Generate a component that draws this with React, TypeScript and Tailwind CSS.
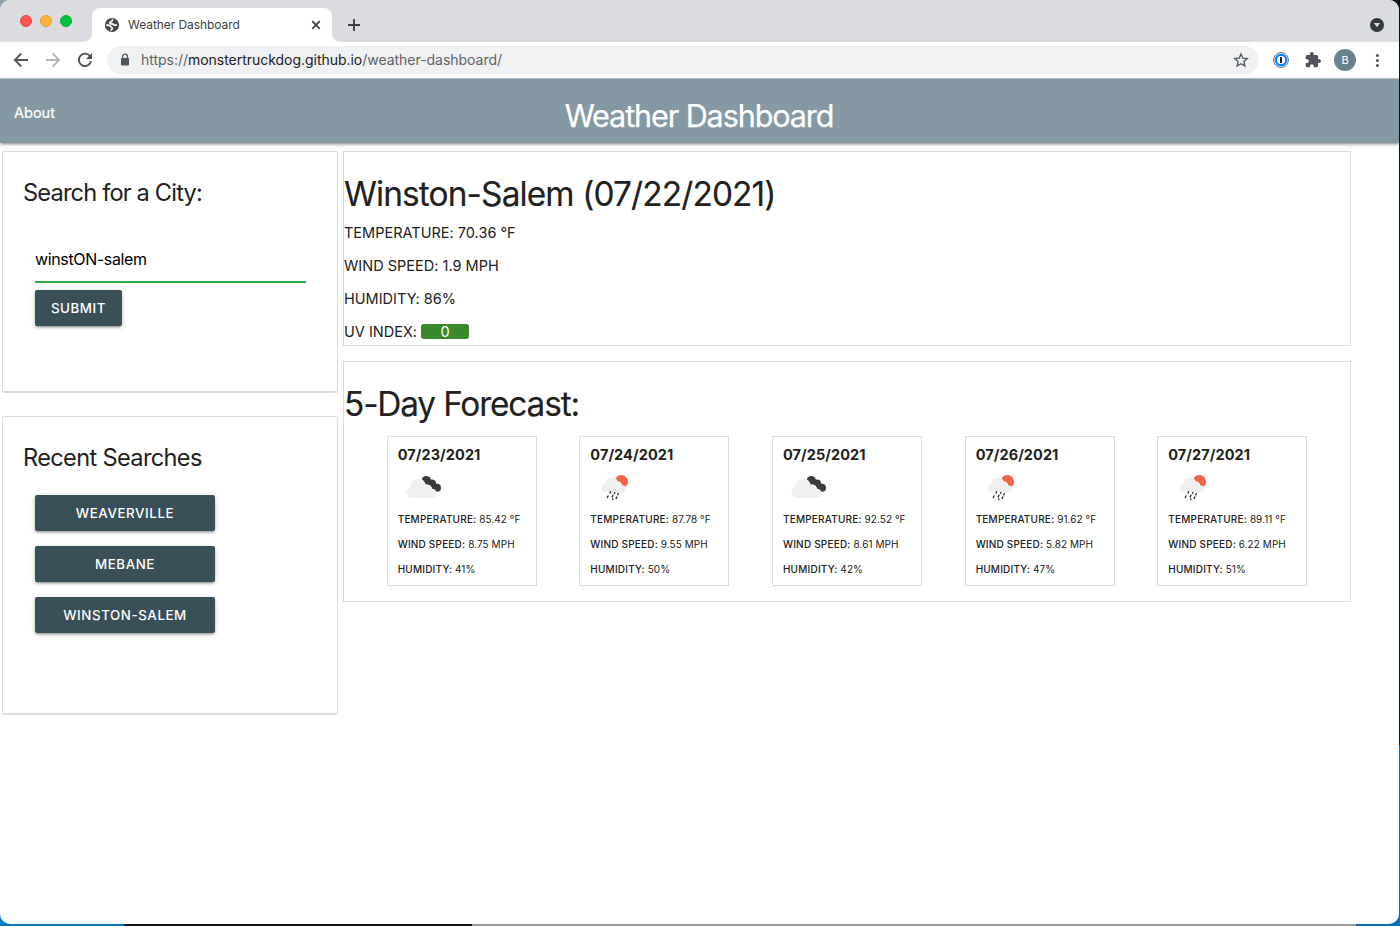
import React from "react";

const FORECAST = [
  { date: "07/23/2021", icon: "clouds", temp: "85.42", wind: "8.75", humidity: 41 },
  { date: "07/24/2021", icon: "rain", temp: "87.78", wind: "9.55", humidity: 50 },
  { date: "07/25/2021", icon: "clouds", temp: "92.52", wind: "8.61", humidity: 42 },
  { date: "07/26/2021", icon: "rain", temp: "91.62", wind: "5.82", humidity: 47 },
  { date: "07/27/2021", icon: "rain", temp: "89.11", wind: "6.22", humidity: 51 },
];

const RECENT = ["Weaverville", "Mebane", "Winston-Salem"];

const BUTTON =
  "h-9 rounded-[2px] bg-[#3a5058] text-[13.3px] font-medium leading-9 tracking-[0.6px] text-white uppercase text-center shadow-[0_2px_2px_0_rgba(0,0,0,0.14),0_3px_1px_-2px_rgba(0,0,0,0.12),0_1px_5px_0_rgba(0,0,0,0.2)]";

function CloudsIcon() {
  return (
    <svg width="50" height="50" viewBox="0 0 50 50">
      <g fill="#3b3b3c">
        <circle cx="28.3" cy="18.5" r="4.6" />
        <circle cx="34" cy="21.6" r="4" />
        <circle cx="39" cy="25.7" r="4" />
        <path d="M26 22l4-6 9 6 1 7-4 0-6-4z" />
      </g>
      <g fill="#fff">
        <circle cx="20" cy="24.3" r="7.9" />
        <circle cx="28.6" cy="27.8" r="5.6" />
        <circle cx="34" cy="31.5" r="4.7" />
      </g>
      <g fill="#efefef">
        <circle cx="13.8" cy="30.3" r="5.4" />
        <circle cx="20" cy="24.3" r="7.3" />
        <circle cx="28.5" cy="28" r="5" />
        <circle cx="34" cy="31.6" r="4.1" />
        <rect x="13.8" y="27" width="20.2" height="8.7" />
      </g>
    </svg>
  );
}

function RainIcon() {
  return (
    <svg width="50" height="50" viewBox="0 0 50 50">
      <circle cx="31.3" cy="19.7" r="6.8" fill="#f7634a" />
      <g fill="#fff">
        <circle cx="21.5" cy="21.3" r="6.4" />
        <circle cx="28" cy="24" r="4.4" />
        <circle cx="32.7" cy="27.3" r="3.7" />
      </g>
      <g fill="#efefef">
        <circle cx="16" cy="26" r="4.3" />
        <circle cx="21.5" cy="21.3" r="5.9" />
        <circle cx="28" cy="24.3" r="4.1" />
        <circle cx="32.7" cy="27.2" r="3.2" />
        <rect x="16" y="23.5" width="16.7" height="6.8" />
      </g>
      <path
        d="M20.6 29.8l-.5 1.2M24.8 30.6l-.3.8M28.3 31.6l-.5 1.2M18 34l-.7 1.5M22.9 33.2l-.7 1.7M26.8 35l-.6 1.6M22.7 37l-.1.5"
        stroke="#333"
        strokeWidth="1.4"
        strokeLinecap="round"
        fill="none"
      />
    </svg>
  );
}

function TabStrip() {
  return (
    <div className="flex h-[42px] items-start bg-[#dadce0]">
      <div className="flex gap-2 pt-[15px] pl-5">
        <span className="size-3 rounded-full border border-[#e0443e] bg-[#ff5350]" />
        <span className="size-3 rounded-full border border-[#dfa03a] bg-[#ffb43a]" />
        <span className="size-3 rounded-full border border-[#0bac2f] bg-[#00c440]" />
      </div>
      <svg className="mt-8 ml-[10px]" width="10" height="10" viewBox="0 0 10 10">
        <path d="M10 0v10H0c6 0 10-3 10-10z" fill="#fff" />
      </svg>
      <div className="mt-2 flex h-[34px] w-[240px] items-center rounded-t-lg bg-white pr-[10px] pl-3">
        <svg width="16" height="16" viewBox="0 0 16 16">
          <circle cx="8" cy="8" r="7.1" fill="#44484c" />
          <path
            d="M9.2 2.6C7.6 2.900 8.500 4.400 7 4.900c-1.300.4-1.700 1.300-.5 1.700 1.500.5 2.900-.1 3.400 1.200.3.700 1.500.5 2.900.1M2.200 8c1.600.1 3.200.1 4.100.8.9.8.4 1.400 1.500 1.900.9.500.3 1.500-.3 1.800-.5.200-.4.800-.4 1.200"
            fill="none"
            stroke="#fff"
            strokeWidth="1.700"
          />
        </svg>
        <span className="ml-2 flex-1 text-[12px] tracking-[-0.06px] text-[#3c4043]">Weather Dashboard</span>
        <svg width="12" height="12" viewBox="0 0 12 12" stroke="#3c4043" strokeWidth="1.7">
          <path d="M2.2 2.2l7.6 7.6M9.8 2.2L2.2 9.8" />
        </svg>
      </div>
      <svg className="mt-8" width="10" height="10" viewBox="0 0 10 10">
        <path d="M0 0v10h10C4 10 0 7 0 0z" fill="#fff" />
      </svg>
      <svg className="mt-[18px] ml-[5px]" width="14" height="14" viewBox="0 0 14 14" stroke="#3c4043" strokeWidth="1.9">
        <path d="M7 1v12M1 7h12" />
      </svg>
      <svg className="mt-[18px] mr-[15px] ml-auto" width="14" height="14" viewBox="0 0 14 14">
        <circle cx="7" cy="7" r="7" fill="#35393c" />
        <path d="M3.9 5h6.2L7 9.2z" fill="#dadce0" />
      </svg>
    </div>
  );
}

function Toolbar() {
  return (
    <div className="flex h-[37px] items-center border-b border-[#c9cbcd] bg-white">
      <div className="flex gap-4 pl-[13px]">
        <svg width="16" height="16" viewBox="0 0 16 16" fill="none" stroke="#50545a" strokeWidth="1.8">
          <path d="M15 8H2M8.3 1.5L1.8 8l6.5 6.5" />
        </svg>
        <svg width="16" height="16" viewBox="0 0 16 16" fill="none" stroke="#b4b6b9" strokeWidth="1.8">
          <path d="M1 8h13M7.7 1.5L14.2 8l-6.5 6.5" />
        </svg>
        <svg width="16" height="16" viewBox="0 0 16 16">
          <path d="M13.3 4.5A6.2 6.2 0 1 0 14.1 9.2" fill="none" stroke="#50545a" strokeWidth="1.9" />
          <path d="M15 1v6H9z" fill="#50545a" />
        </svg>
      </div>
      <div className="ml-[14px] flex h-7 w-[1152px] items-center rounded-full bg-[#f0f1f3] pr-[10px] pl-[13px]">
        <svg width="10" height="14" viewBox="0 0 10 14">
          <path d="M2.5 6V3.7a2.5 2.5 0 0 1 5 0V6" fill="none" stroke="#50545a" strokeWidth="1.3" />
          <rect x="1" y="5" width="8" height="7.5" rx="1" fill="#50545a" />
        </svg>
        <span className="ml-[11px] flex-1 pb-[2px] text-[14px] tracking-[-0.03px] text-[#5f6368]">
          https://<span className="text-[#202124]">monstertruckdog.github.io</span>/weather-dashboard/
        </span>
        <svg width="16" height="16" viewBox="0 0 16 16" fill="none" stroke="#50545a" strokeWidth="1.3">
          <path d="M8 2l1.8 4.2 4.5.4-3.4 3 1 4.4L8 11.7 4.1 14l1-4.4-3.4-3 4.5-.4z" />
        </svg>
      </div>
      <svg className="ml-[14px]" width="16" height="16" viewBox="0 0 16 16">
        <circle cx="8" cy="8" r="7.4" fill="#fff" stroke="#62666a" />
        <circle cx="8" cy="8" r="5.2" fill="#fff" stroke="#0a84ff" strokeWidth="2.2" />
        <rect x="7" y="5" width="2" height="6" rx=".5" fill="#222" />
      </svg>
      <svg className="ml-4" width="16" height="16" viewBox="1 1 22 22">
        <path
          d="M20.5 11H19V7c0-1.1-.9-2-2-2h-4V3.5a2.5 2.5 0 0 0-5 0V5H4c-1.1 0-2 .9-2 2v3.8h1.5a2.7 2.7 0 0 1 0 5.4H2V20c0 1.1.9 2 2 2h3.8v-1.5a2.7 2.7 0 0 1 5.4 0V22H17c1.1 0 2-.9 2-2v-4h1.5a2.5 2.5 0 0 0 0-5z"
          fill="#50545a"
        />
      </svg>
      <span className="ml-[13px] flex size-[22px] items-center justify-center rounded-full bg-[#69828e] text-[11px] text-white">B</span>
      <svg className="ml-[13px]" width="16" height="16" viewBox="0 0 16 16" fill="#50545a">
        <circle cx="8.4" cy="3.5" r="1.5" />
        <circle cx="8.4" cy="8.5" r="1.5" />
        <circle cx="8.4" cy="13.5" r="1.5" />
      </svg>
    </div>
  );
}

function Desktop({ children }: { children: React.ReactNode }) {
  return (
    <div className="flex h-[926px] w-[1400px] flex-col overflow-hidden bg-[linear-gradient(90deg,#0078bd_0_124px,#141414_124px_472px,#9b9b99_472px_1356px,#0073b8_1356px)]">
      <div className="h-[924px] bg-[linear-gradient(#8aa0a8_0_450px,#007dc8_450px),linear-gradient(#06141c_0_745px,#0073b8_745px)] bg-[length:700px_100%,100%_100%] bg-no-repeat pr-px">
        {children}
      </div>
    </div>
  );
}

export default function App() {
  return (
    <Desktop>
      <div className="flex h-[924px] w-[1399px] flex-col overflow-hidden rounded-[10px] bg-white font-['Inter',sans-serif] text-[#212121]">
        <TabStrip />
        <Toolbar />
        <nav className="z-10 grid h-16 shrink-0 grid-cols-3 bg-[#8499a3] text-white shadow-[0_2px_2px_0_rgba(0,0,0,0.14),0_3px_1px_-2px_rgba(0,0,0,0.12),0_1px_5px_0_rgba(0,0,0,0.2)]">
          <a className="pl-[14px] text-[14.5px] leading-[68px] [-webkit-text-stroke:0.2px_#fff]">About</a>
          <h1 className="pr-px text-center text-[30.5px] leading-[74px] tracking-[-1.07px] [-webkit-text-stroke:0.25px_#fff]">Weather Dashboard</h1>
        </nav>
        <main className="flex gap-[5px] pt-2 pl-[2px]">
          <aside className="flex w-[336px] flex-col gap-[23px]">
            <section className="h-[242px] rounded-[2px] border border-b-2 border-[#dcdcdc] pt-[25px] pl-8">
              <h2 className="-ml-[12px] text-[23.6px] leading-8 tracking-[-0.82px]">Search for a City:</h2>
              <form className="pt-[27px]" onSubmit={(e) => e.preventDefault()}>
                <input
                  className="block h-[47px] w-[271px] border-b-2 border-[#34a94b] text-[16px] tracking-[-0.36px] text-black outline-none"
                  defaultValue="winstON-salem"
                />
                <button className={`${BUTTON} mt-[7px] w-[87px]`}>Submit</button>
              </form>
            </section>
            <section className="h-[299px] rounded-[2px] border border-b-2 border-[#dcdcdc] pt-[25px] pl-8">
              <h2 className="-ml-[12px] text-[23.6px] leading-8 tracking-[-0.66px]">Recent Searches</h2>
              <div className="flex flex-col gap-[15px] pt-[21px]">
                {RECENT.map((city) => (
                  <button key={city} className={`${BUTTON} w-[180px]`}>
                    {city}
                  </button>
                ))}
              </div>
            </section>
          </aside>
          <div className="flex w-[1008px] flex-col gap-[15px]">
            <section className="h-[195px] border border-[#dcdcdc] pt-[22px]">
              <h2 className="text-[33.4px] leading-10 tracking-[-0.87px] [-webkit-text-stroke:0.15px_#212121]">Winston-Salem (07/22/2021)</h2>
              <div className="flex flex-col gap-[11px] pt-[8px] text-[14.5px] leading-[22px] tracking-[0.01px]">
                <p>TEMPERATURE: 70.36 °F</p>
                <p>WIND SPEED: 1.9 MPH</p>
                <p>HUMIDITY: 86%</p>
                <p className="flex items-center">
                  UV INDEX:
                  <span className="mb-px ml-1 h-[15px] w-12 rounded-[3px] bg-[#388a2d] text-center leading-[15px] text-white">0</span>
                </p>
              </div>
            </section>
            <section className="h-[241px] border border-[#dcdcdc] pt-[22px]">
              <h2 className="text-[33.4px] leading-10 tracking-[-1.17px] [-webkit-text-stroke:0.15px_#212121]">5-Day Forecast:</h2>
              <div className="flex justify-evenly pt-3">
                {FORECAST.map((day) => (
                  <article key={day.date} className="flex h-[150px] w-[150px] flex-col border border-[#dcdcdc] pt-[7px] pl-[10px]">
                    <h3 className="text-[14.5px] leading-[22px] font-bold tracking-[0.08px]">{day.date}</h3>
                    <div className="-mt-[4px] h-[50px]">{day.icon === "clouds" ? <CloudsIcon /> : <RainIcon />}</div>
                    <div className="flex flex-col gap-[10px] text-[10px] leading-[15px] tracking-[0.06px]">
                      <p>
                        <span className="font-medium tracking-[0.2px]">TEMPERATURE:</span> {day.temp} °F
                      </p>
                      <p>
                        <span className="font-medium tracking-[0.2px]">WIND SPEED:</span> {day.wind} MPH
                      </p>
                      <p>
                        <span className="font-medium tracking-[0.2px]">HUMIDITY:</span> {day.humidity}%
                      </p>
                    </div>
                  </article>
                ))}
              </div>
            </section>
          </div>
        </main>
      </div>
    </Desktop>
  );
}
